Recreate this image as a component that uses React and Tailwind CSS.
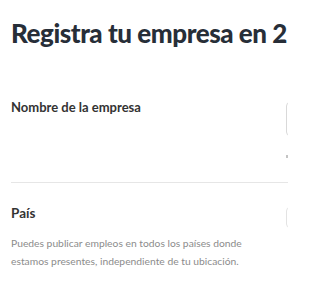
export default function App() {
  return (
    <div
      className="w-[288px] h-[288px] overflow-hidden bg-white"
      style={{ fontFamily: "Lato, 'Open Sans', sans-serif" }}
    >
      <div className="w-[620px] pl-[11px]">
        <h1 className="pt-[18px] text-[26px] leading-[30px] font-black text-[#272e38] tracking-[-0.45px] whitespace-nowrap">
          Registra tu empresa en 2
        </h1>

        <div className="mt-[51px] flex h-[84px] border-b border-[#e6e6e6]">
          <div className="w-[275px] shrink-0">
            <p className="text-[13px] leading-4 font-bold text-[#333]">Nombre de la empresa</p>
          </div>
          <div className="w-[300px]">
            <div className="mt-[3px] h-[34px] rounded border border-[#d9d9d9]" />
            <div className="mt-[19px] h-[3px] w-[2px] bg-[#c4c4c4]" />
          </div>
        </div>

        <div className="flex pt-[20px]">
          <div className="w-[275px] shrink-0">
            <p className="text-[13.5px] leading-5 font-bold text-[#333]">País</p>
            <p className="mt-[11px] w-[240px] text-[10.3px] leading-[18px] text-[#8c8c8c]">
              Puedes publicar empleos en todos los países donde estamos presentes, independiente de tu ubicación.
            </p>
          </div>
          <div className="w-[300px]">
            <div className="mt-[4px] h-[21px] rounded border border-[#e3e3e3]" />
          </div>
        </div>
      </div>
    </div>
  );
}
